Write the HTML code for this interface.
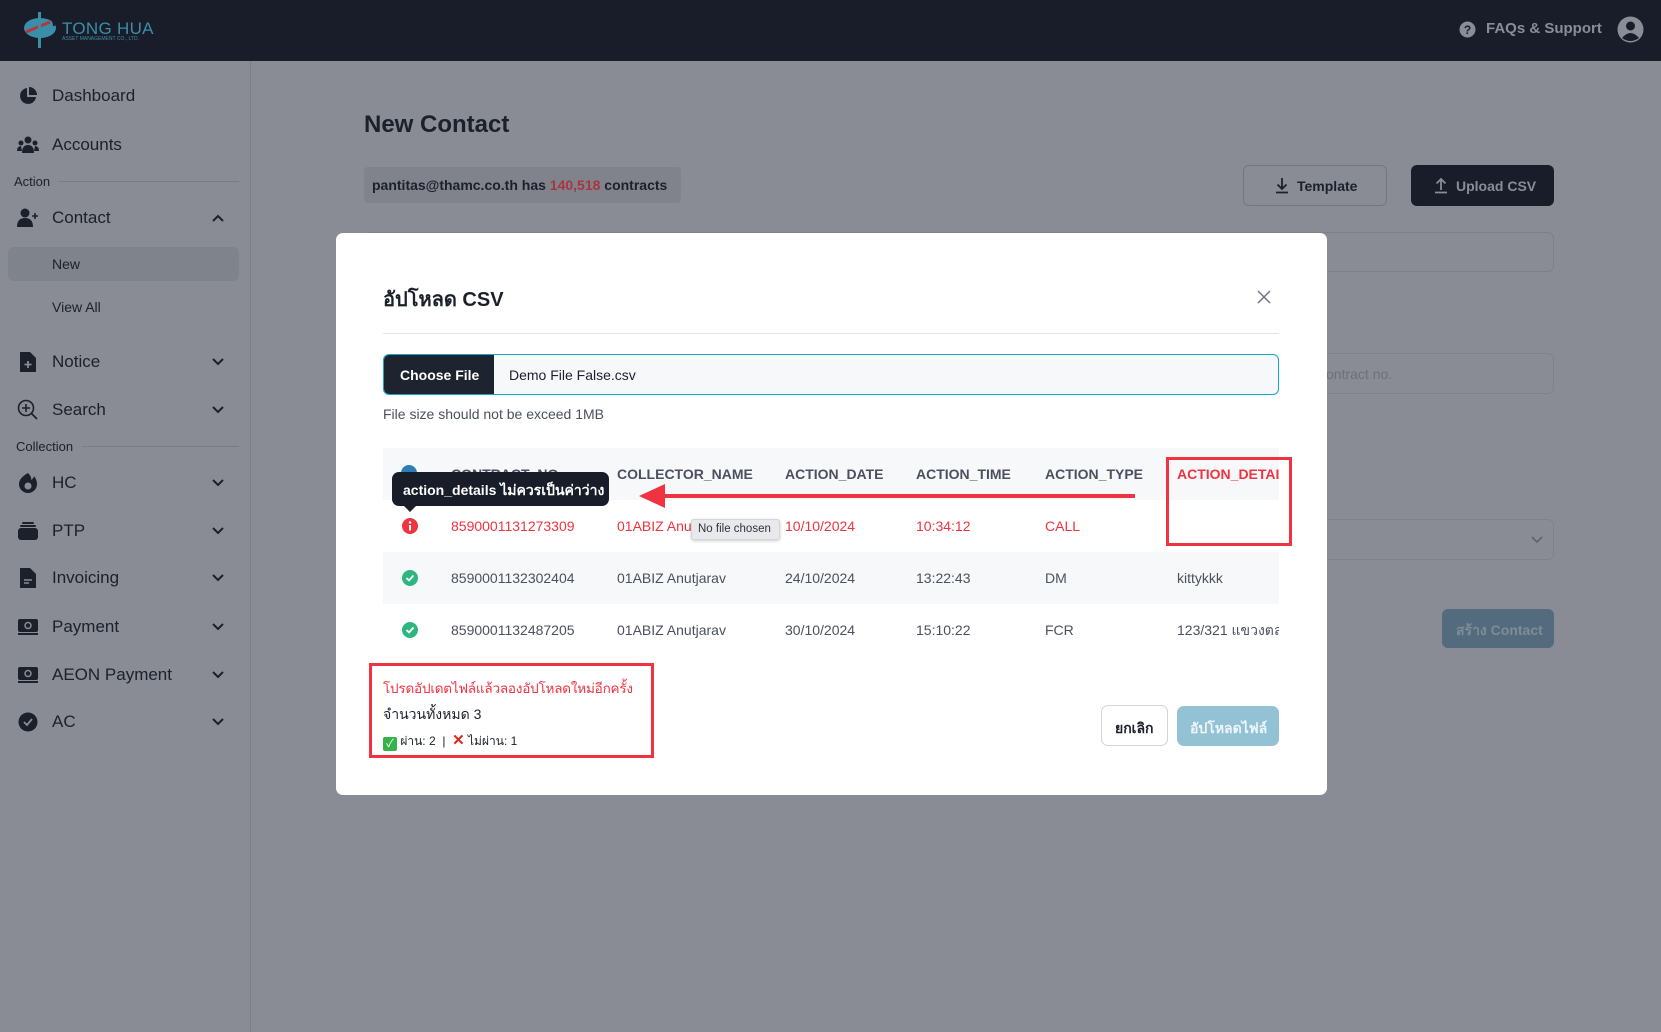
<!DOCTYPE html>
<html><head><meta charset="utf-8"><style>
*{box-sizing:border-box;margin:0;padding:0}
body{width:1661px;height:1032px;overflow:hidden;background:#898c94;font-family:"Liberation Sans","Noto Sans CJK SC",sans-serif;color:#1b202b;position:relative}
.a{position:absolute}
.hdr{left:0;top:0;width:1661px;height:61px;background:#181d29}
.side{left:0;top:61px;width:251px;height:971px;border-right:1px solid #7c7f87}
.it{left:0;width:251px;height:40px;display:flex;align-items:center;font-size:17px;color:#1b202b}
.it .ic{position:absolute;left:17px;width:22px;height:22px;display:flex;align-items:center;justify-content:center}
.it .tx{position:absolute;left:52px}
.it .ch{position:absolute;left:211px;top:13px}
.sec{left:14px;font-size:13px;color:#1b202b}
.secl{height:1px;background:#797c84}
.t{position:absolute;white-space:nowrap}
.red{color:#ef3340}
.gr{color:#4b5060}
</style></head><body>
<div class="a hdr">
 <svg class="a" style="left:20px;top:10px" width="44" height="40" viewBox="0 0 44 40"><ellipse cx="20" cy="18" rx="16" ry="10" fill="#3a8fa8"/><path d="M6 22 L30 12" stroke="#b8343c" stroke-width="3"/><rect x="18" y="2" width="3" height="36" fill="#3a8fa8"/><path d="M21 6 Q34 6 34 16" stroke="#181d29" stroke-width="2" fill="none"/></svg>
 <div class="t" style="left:62px;top:19px;font-size:17px;color:#3c8ea6;letter-spacing:0.3px">TONG HUA</div>
 <div class="t" style="left:62px;top:36px;font-size:5px;color:#3c8ea6">ASSET MANAGEMENT CO., LTD.</div>
 <svg class="a" style="left:1459px;top:21px" width="17" height="17" viewBox="0 0 17 17"><circle cx="8.5" cy="8.5" r="8" fill="#8a8d95"/><text x="8.5" y="13" font-size="12" font-weight="bold" text-anchor="middle" fill="#181d29" font-family="Liberation Sans">?</text></svg>
 <div class="t" style="left:1486px;top:20px;font-size:15px;color:#8a8d95;font-weight:bold">FAQs &amp; Support</div>
 <svg class="a" style="left:1617px;top:16px" width="27" height="27" viewBox="0 0 27 27"><circle cx="13.5" cy="13.5" r="13" fill="#8a8d95"/><circle cx="13.5" cy="10" r="4.5" fill="#181d29"/><path d="M5 22 Q13.5 12 22 22 Q13.5 28 5 22Z" fill="#181d29"/></svg>
</div>
<div class="a side"></div>
<div class="a it" style="top:76px"><span class="ic"><svg width="20" height="20" viewBox="0 0 20 20"><path d="M9 2 A8 8 0 1 0 18 11 L9 11Z" fill="#1b202b"/><path d="M11 1 A8 8 0 0 1 19 9 L11 9Z" fill="#1b202b"/></svg></span><span class="tx">Dashboard</span></div>
<div class="a it" style="top:125px"><span class="ic"><svg width="22" height="18" viewBox="0 0 22 18"><circle cx="11" cy="4" r="3.5" fill="#1b202b"/><circle cx="4" cy="7" r="2.5" fill="#1b202b"/><circle cx="18" cy="7" r="2.5" fill="#1b202b"/><path d="M5 17 Q5 9 11 9 Q17 9 17 17Z M0 15 Q0 10 4 10 L5 15Z M22 15 Q22 10 18 10 L17 15Z" fill="#1b202b"/></svg></span><span class="tx">Accounts</span></div>
<div class="a sec" style="top:174px">Action</div><div class="a secl" style="left:58px;top:181px;width:181px"></div>
<div class="a it" style="top:198px"><span class="ic"><svg width="22" height="20" viewBox="0 0 22 20"><circle cx="8" cy="5" r="4.5" fill="#1b202b"/><path d="M0 19 Q0 10 8 10 Q16 10 16 19Z" fill="#1b202b"/><path d="M18 5v6M15 8h6" stroke="#1b202b" stroke-width="1.6"/></svg></span><span class="tx">Contact</span><svg class="ch" width="14" height="14" viewBox="0 0 14 14"><path d="M2 10 L7 5 L12 10" stroke="#1b202b" stroke-width="2" fill="none"/></svg></div>
<div class="a" style="left:8px;top:247px;width:231px;height:34px;background:#7f838c;border-radius:6px"></div>
<div class="t" style="left:52px;top:256px;font-size:14px">New</div>
<div class="t" style="left:52px;top:299px;font-size:14px">View All</div>
<div class="a it" style="top:342px"><span class="ic"><svg width="18" height="22" viewBox="0 0 18 22"><path d="M1 1 H11 L17 7 V21 H1Z" fill="#1b202b"/><path d="M9 10v7M5.5 13.5h7" stroke="#898c94" stroke-width="1.8"/></svg></span><span class="tx">Notice</span><svg class="ch" width="14" height="14" viewBox="0 0 14 14"><path d="M2 4 L7 9 L12 4" stroke="#1b202b" stroke-width="2" fill="none"/></svg></div>
<div class="a it" style="top:390px"><span class="ic"><svg width="22" height="22" viewBox="0 0 22 22"><circle cx="9" cy="9" r="7.5" stroke="#1b202b" stroke-width="1.6" fill="none"/><path d="M14.5 14.5 L20 20M9 5v8M5 9h8" stroke="#1b202b" stroke-width="1.6"/></svg></span><span class="tx">Search</span><svg class="ch" width="14" height="14" viewBox="0 0 14 14"><path d="M2 4 L7 9 L12 4" stroke="#1b202b" stroke-width="2" fill="none"/></svg></div>
<div class="a sec" style="top:439px;left:16px">Collection</div><div class="a secl" style="left:82px;top:446px;width:157px"></div>
<div class="a it" style="top:463px"><span class="ic"><svg width="20" height="22" viewBox="0 0 20 22"><path d="M10 1 Q14 5 13 8 Q16 6 16 4 Q19 8 19 12 A9 9 0 0 1 1 12 Q1 6 10 1Z" fill="#1b202b"/><circle cx="10" cy="14" r="3.5" fill="#898c94"/></svg></span><span class="tx">HC</span><svg class="ch" width="14" height="14" viewBox="0 0 14 14"><path d="M2 4 L7 9 L12 4" stroke="#1b202b" stroke-width="2" fill="none"/></svg></div>
<div class="a it" style="top:511px"><span class="ic"><svg width="22" height="20" viewBox="0 0 22 20"><rect x="5" y="1" width="12" height="2" rx="1" fill="#1b202b"/><rect x="3" y="4" width="16" height="2" rx="1" fill="#1b202b"/><rect x="1" y="7" width="20" height="12" rx="3" fill="#1b202b"/></svg></span><span class="tx">PTP</span><svg class="ch" width="14" height="14" viewBox="0 0 14 14"><path d="M2 4 L7 9 L12 4" stroke="#1b202b" stroke-width="2" fill="none"/></svg></div>
<div class="a it" style="top:558px"><span class="ic"><svg width="18" height="22" viewBox="0 0 18 22"><path d="M1 1 H11 L17 7 V21 H1Z" fill="#1b202b"/><path d="M5 13h8M5 16h5" stroke="#898c94" stroke-width="1.6"/></svg></span><span class="tx">Invoicing</span><svg class="ch" width="14" height="14" viewBox="0 0 14 14"><path d="M2 4 L7 9 L12 4" stroke="#1b202b" stroke-width="2" fill="none"/></svg></div>
<div class="a it" style="top:607px"><span class="ic"><svg width="22" height="20" viewBox="0 0 22 20"><rect x="1" y="2" width="20" height="13" rx="2" fill="#1b202b"/><circle cx="11" cy="8.5" r="3" stroke="#898c94" stroke-width="1.5" fill="none"/><path d="M1 17h20" stroke="#1b202b" stroke-width="2"/></svg></span><span class="tx">Payment</span><svg class="ch" width="14" height="14" viewBox="0 0 14 14"><path d="M2 4 L7 9 L12 4" stroke="#1b202b" stroke-width="2" fill="none"/></svg></div>
<div class="a it" style="top:655px"><span class="ic"><svg width="22" height="20" viewBox="0 0 22 20"><rect x="1" y="2" width="20" height="13" rx="2" fill="#1b202b"/><circle cx="11" cy="8.5" r="3" stroke="#898c94" stroke-width="1.5" fill="none"/><path d="M1 17h20" stroke="#1b202b" stroke-width="2"/></svg></span><span class="tx">AEON Payment</span><svg class="ch" width="14" height="14" viewBox="0 0 14 14"><path d="M2 4 L7 9 L12 4" stroke="#1b202b" stroke-width="2" fill="none"/></svg></div>
<div class="a it" style="top:702px"><span class="ic"><svg width="20" height="20" viewBox="0 0 20 20"><circle cx="10" cy="10" r="9.5" fill="#1b202b"/><path d="M6 10 L9 13 L14 7" stroke="#898c94" stroke-width="1.8" fill="none"/></svg></span><span class="tx">AC</span><svg class="ch" width="14" height="14" viewBox="0 0 14 14"><path d="M2 4 L7 9 L12 4" stroke="#1b202b" stroke-width="2" fill="none"/></svg></div>

<div class="t" style="left:364px;top:111px;font-size:24px;font-weight:bold">New Contact</div>
<div class="a" style="left:364px;top:167px;width:317px;height:36px;background:#80838c;border-radius:4px"></div>
<div class="t" style="left:372px;top:177px;font-size:14px;font-weight:bold">pantitas@thamc.co.th has <span style="color:#a8363f">140,518</span> contracts</div>
<div class="a" style="left:1243px;top:165px;width:144px;height:41px;border:1px solid #74777f;border-radius:6px"></div>
<svg class="a" style="left:1274px;top:177px" width="16" height="17" viewBox="0 0 16 17"><path d="M8 1v11M3.5 7.5 L8 12 L12.5 7.5M2 15.5h12" stroke="#1b202b" stroke-width="1.8" fill="none"/></svg>
<div class="t" style="left:1297px;top:178px;font-size:14px;font-weight:bold">Template</div>
<div class="a" style="left:1411px;top:165px;width:143px;height:41px;background:#181d29;border-radius:6px"></div>
<svg class="a" style="left:1433px;top:177px" width="16" height="17" viewBox="0 0 16 17"><path d="M8 13V2M3.5 6.5 L8 2 L12.5 6.5M2 15.5h12" stroke="#8a8d95" stroke-width="1.8" fill="none"/></svg>
<div class="t" style="left:1456px;top:178px;font-size:14px;font-weight:bold;color:#8a8d95">Upload CSV</div>
<div class="a" style="left:364px;top:232px;width:1190px;height:40px;border:1px solid #7c8088;border-radius:6px"></div>
<div class="a" style="left:364px;top:353px;width:1190px;height:41px;border:1px solid #7f828b;border-radius:6px"></div>
<div class="t" style="left:1326px;top:366px;font-size:14px;color:#6c7079">ontract no.</div>
<div class="a" style="left:364px;top:519px;width:1190px;height:41px;border:1px solid #7f828b;border-radius:6px"></div>
<svg class="a" style="left:1530px;top:533px" width="14" height="14" viewBox="0 0 14 14"><path d="M2 4 L7 9 L12 4" stroke="#61656e" stroke-width="1.8" fill="none"/></svg>
<div class="a" style="left:1442px;top:609px;width:112px;height:39px;background:#536b7c;border-radius:6px"></div>
<div class="t" style="left:1456px;top:620px;font-size:14px;font-weight:bold;color:#7d8c98">สร้าง Contact</div>

<div class="a" style="left:336px;top:233px;width:991px;height:562px;background:#fff;border-radius:7px"></div>
<div class="t" style="left:383px;top:283px;font-size:20px;font-weight:bold">อัปโหลด CSV</div>
<svg class="a" style="left:1257px;top:290px" width="14" height="14" viewBox="0 0 14 14"><path d="M1 1L13 13M13 1L1 13" stroke="#6b7080" stroke-width="1.4"/></svg>
<div class="a" style="left:383px;top:333px;width:896px;height:1px;background:#e3e5e8"></div>
<div class="a" style="left:383px;top:354px;width:896px;height:41px;border:1px solid #17a5c9;border-radius:6px;background:#f7f8fa;overflow:hidden"><div style="position:absolute;left:0;top:0;width:110px;height:41px;background:#1e2330"></div></div>
<div class="t" style="left:400px;top:367px;font-size:14px;font-weight:bold;color:#fff">Choose File</div>
<div class="t" style="left:509px;top:367px;font-size:14px;color:#1b202b">Demo File False.csv</div>
<div class="t" style="left:383px;top:406px;font-size:14px;color:#4b5060">File size should not be exceed 1MB</div>
<div class="a" style="left:383px;top:448px;width:896px;height:52px;background:#f7f8fa"></div>
<div class="a" style="left:383px;top:552px;width:896px;height:52px;background:#f7f8fa"></div>
<div class="a" style="left:401px;top:465px;width:16px;height:16px;border-radius:50%;background:#2b7fb5"></div>
<div class="t gr" style="left:451px;top:466px;font-size:14px;font-weight:bold">CONTRACT_NO</div>
<div class="t gr" style="left:617px;top:466px;font-size:14px;font-weight:bold">COLLECTOR_NAME</div>
<div class="t gr" style="left:785px;top:466px;font-size:14px;font-weight:bold">ACTION_DATE</div>
<div class="t gr" style="left:916px;top:466px;font-size:14px;font-weight:bold">ACTION_TIME</div>
<div class="t gr" style="left:1045px;top:466px;font-size:14px;font-weight:bold">ACTION_TYPE</div>
<div class="a" style="left:1160px;top:448px;width:119px;height:40px;overflow:hidden"><div class="t red" style="left:17px;top:18px;font-size:14px;font-weight:bold">ACTION_DETAILS</div></div>
<svg class="a" style="left:402px;top:518px" width="16" height="16" viewBox="0 0 16 16"><circle cx="8" cy="8" r="8" fill="#ef3340"/><circle cx="8" cy="4.5" r="1.2" fill="#fff"/><rect x="7" y="7" width="2" height="5.5" fill="#fff"/></svg>
<div class="t red" style="left:451px;top:518px;font-size:14px">8590001131273309</div>
<div class="t red" style="left:617px;top:518px;font-size:14px">01ABIZ Anu</div>
<div class="t red" style="left:785px;top:518px;font-size:14px">10/10/2024</div>
<div class="t red" style="left:916px;top:518px;font-size:14px">10:34:12</div>
<div class="t red" style="left:1045px;top:518px;font-size:14px">CALL</div>
<svg class="a" style="left:402px;top:570px" width="16" height="16" viewBox="0 0 16 16"><circle cx="8" cy="8" r="8" fill="#2fb57e"/><path d="M4.5 8 L7 10.5 L11.5 5.5" stroke="#fff" stroke-width="1.8" fill="none"/></svg>
<div class="t gr" style="left:451px;top:570px;font-size:14px">8590001132302404</div>
<div class="t gr" style="left:617px;top:570px;font-size:14px">01ABIZ Anutjarav</div>
<div class="t gr" style="left:785px;top:570px;font-size:14px">24/10/2024</div>
<div class="t gr" style="left:916px;top:570px;font-size:14px">13:22:43</div>
<div class="t gr" style="left:1045px;top:570px;font-size:14px">DM</div>
<div class="t gr" style="left:1177px;top:570px;font-size:14px">kittykkk</div>
<svg class="a" style="left:402px;top:622px" width="16" height="16" viewBox="0 0 16 16"><circle cx="8" cy="8" r="8" fill="#2fb57e"/><path d="M4.5 8 L7 10.5 L11.5 5.5" stroke="#fff" stroke-width="1.8" fill="none"/></svg>
<div class="t gr" style="left:451px;top:622px;font-size:14px">8590001132487205</div>
<div class="t gr" style="left:617px;top:622px;font-size:14px">01ABIZ Anutjarav</div>
<div class="t gr" style="left:785px;top:622px;font-size:14px">30/10/2024</div>
<div class="t gr" style="left:916px;top:622px;font-size:14px">15:10:22</div>
<div class="t gr" style="left:1045px;top:622px;font-size:14px">FCR</div>
<div class="a" style="left:1160px;top:612px;width:119px;height:30px;overflow:hidden"><div class="t gr" style="left:17px;top:8px;font-size:14px">123/321 แขวงตลาด</div></div>
<div class="a" style="left:1166px;top:457px;width:126px;height:89px;border:3px solid #ef3340"></div>
<div class="a" style="left:660px;top:494px;width:475px;height:4px;background:#ef3340"></div>
<svg class="a" style="left:639px;top:484px" width="26" height="24" viewBox="0 0 26 24"><path d="M0 12 L26 0 L26 24Z" fill="#ef3340"/></svg>
<div class="a" style="left:392px;top:472px;width:217px;height:34px;background:#181d29;border-radius:7px"></div>
<svg class="a" style="left:403px;top:505px" width="14" height="7" viewBox="0 0 14 7"><path d="M0 0 L7 7 L14 0Z" fill="#181d29"/></svg>
<div class="t" style="left:403px;top:480px;font-size:14px;font-weight:bold;color:#fff">action_details ไม่ควรเป็นค่าว่าง</div>
<div class="a" style="left:691px;top:519px;width:89px;height:21px;background:#e8e9ec;border:1px solid #d3d5d9;border-radius:3px;box-shadow:0 1px 3px rgba(0,0,0,.2)"></div>
<div class="t" style="left:698px;top:523px;font-size:11.5px;color:#333">No file chosen</div>
<div class="a" style="left:369px;top:663px;width:285px;height:95px;border:3px solid #ef3340"></div>
<div class="t red" style="left:383px;top:677px;font-size:13.5px;letter-spacing:-0.2px">โปรดอัปเดตไฟล์แล้วลองอัปโหลดใหม่อีกครั้ง</div>
<div class="t" style="left:383px;top:704px;font-size:14px">จำนวนทั้งหมด 3</div>
<div class="t" style="left:383px;top:731px;font-size:12px"><span style="display:inline-block;width:14px;height:14px;background:#33b34a;border-radius:2px;color:#fff;text-align:center;line-height:14px;font-size:11px;vertical-align:-2px">✓</span> ผ่าน: 2 &nbsp;|&nbsp; <span style="color:#e1261c;font-weight:bold;font-size:15px">✕</span> ไม่ผ่าน: 1</div>
<div class="a" style="left:1101px;top:705px;width:67px;height:41px;border:1px solid #d1d4d9;border-radius:7px"></div>
<div class="t" style="left:1115px;top:718px;font-size:14px;font-weight:bold">ยกเลิก</div>
<div class="a" style="left:1177px;top:706px;width:102px;height:40px;background:#93c2d5;border-radius:7px"></div>
<div class="t" style="left:1190px;top:718px;font-size:14px;font-weight:bold;color:#eef6fa">อัปโหลดไฟล์</div>
</body></html>
